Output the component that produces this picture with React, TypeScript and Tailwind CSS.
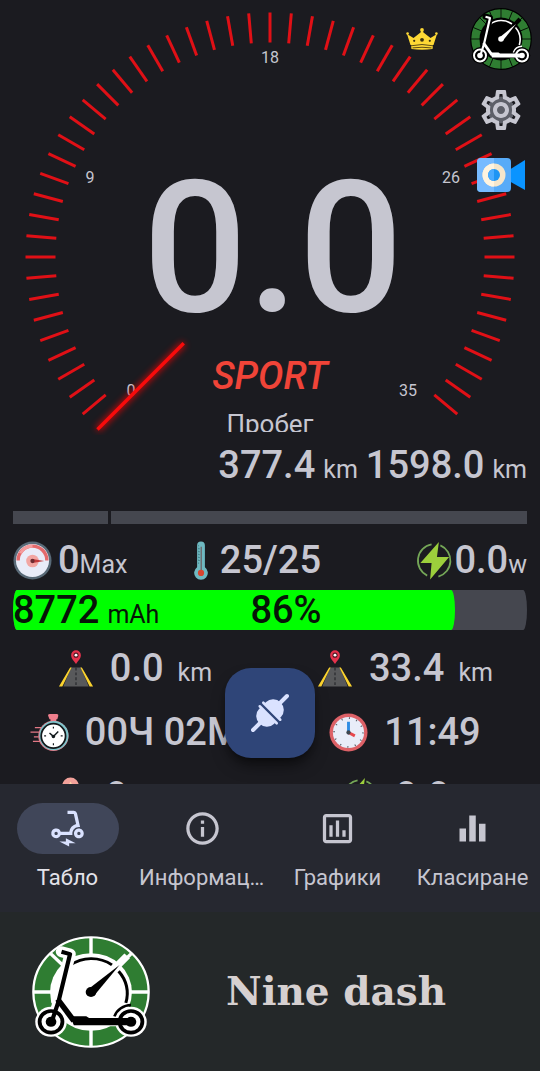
import { ReactNode } from "react";
import {
  MdElectricScooter,
  MdEqualizer,
  MdInfoOutline,
  MdOutlineAssessment,
  MdOutlineSettings,
} from "react-icons/md";

type LogoProps = {
  className: string;
  ink: string;
  paper: string;
  segments: number;
};

const CX = 270;
const CY = 257;

const ticks = Array.from({ length: 53 }, (_, i) => -40 + i * 5);

const scaleLabels = [
  { text: "0", x: 131, y: 396 },
  { text: "9", x: 90, y: 183 },
  { text: "18", x: 270, y: 63 },
  { text: "26", x: 451, y: 183 },
  { text: "35", x: 408, y: 396 },
];

const navItems = [
  { label: "Табло", icon: MdElectricScooter, active: true },
  { label: "Информация", icon: MdInfoOutline, active: false },
  { label: "Графики", icon: MdOutlineAssessment, active: false },
  { label: "Класиране", icon: MdEqualizer, active: false },
];

function polar(angle: number, radius: number) {
  const rad = (angle * Math.PI) / 180;
  return { x: CX + Math.cos(rad) * radius, y: CY - Math.sin(rad) * radius };
}

function Gauge() {
  const outer = polar(225, 244);
  const inner = polar(225, 122);

  return (
    <svg viewBox="0 0 540 435" className="col-start-1 row-start-1 w-full" aria-hidden="true">
      <defs>
        <filter id="glow" x="-20%" y="-20%" width="140%" height="140%">
          <feGaussianBlur stdDeviation="3" />
        </filter>
      </defs>
      {ticks.map((angle) => {
        const a = polar(angle, 244.5);
        const b = polar(angle, 214.5);
        return <line key={angle} x1={a.x} y1={a.y} x2={b.x} y2={b.y} stroke="#e01016" strokeWidth="3" />;
      })}
      {scaleLabels.map((item) => (
        <text key={item.text} x={item.x} y={item.y} textAnchor="middle" fontSize="16" fill="#c6c6d0">
          {item.text}
        </text>
      ))}
      <line x1={outer.x} y1={outer.y} x2={inner.x} y2={inner.y} stroke="#ff0000" strokeWidth="6" opacity="0.7" filter="url(#glow)" />
      <line x1={outer.x} y1={outer.y} x2={inner.x} y2={inner.y} stroke="#f80b0b" strokeWidth="3.4" />
    </svg>
  );
}

function Logo({ className, ink, paper, segments }: LogoProps) {
  const spokes = Array.from({ length: segments }, (_, i) => (i * 360) / segments);

  return (
    <svg viewBox="0 0 62 62" preserveAspectRatio="none" className={className} aria-hidden="true">
      <circle cx="31" cy="31" r="30.3" fill="#2f7d32" stroke={paper} strokeWidth="1.2" />
      {spokes.map((angle) => (
        <line
          key={angle}
          x1="31"
          y1="31"
          x2="31"
          y2="1"
          stroke={paper}
          strokeWidth={segments > 8 ? 0.8 : 1.8}
          transform={`rotate(${angle} 31 31)`}
        />
      ))}
      <circle cx="31" cy="31" r="21.5" fill={paper} />
      <path d="M20 16.300A18.600 18.600 0 0 1 42 16M45.500 19.500A18.600 18.600 0 0 1 49.300 37" fill="none" stroke={ink} strokeWidth="1.6" />
      <path d="M31 31L50 11" stroke={paper} strokeWidth="4" />
      <path d="M29.500 29.500L46 16L32.800 32.800Z" fill={ink} />
      <circle cx="31" cy="31" r="2.8" fill={ink} />
      <path d="M15.500 8.700L20 10L14 36L11 47M13 36L22 47H52" fill="none" stroke={paper} strokeWidth="6" strokeLinejoin="round" strokeLinecap="round" />
      <circle cx="10" cy="47.5" r="8.3" fill={paper} />
      <circle cx="52" cy="47.5" r="8.3" fill={paper} />
      <circle cx="10" cy="47.5" r="6" fill={paper} stroke={ink} strokeWidth="2" />
      <circle cx="52" cy="47.5" r="6" fill={paper} stroke={ink} strokeWidth="2" />
      <circle cx="10" cy="47.5" r="2.8" fill={ink} />
      <circle cx="52" cy="47.5" r="2.8" fill={ink} />
      <path d="M15.500 8.700L20 10L14 36L10.500 47" fill="none" stroke={ink} strokeWidth="2.2" strokeLinejoin="round" />
      <path d="M13.500 35L22 47" fill="none" stroke={ink} strokeWidth="3" />
      <path d="M20 44.400H28.500L30 45.400H52V49.400H22Z" fill={ink} />
      <path d="M43.300 44.500A9.500 9.500 0 0 1 52 38.200" fill="none" stroke={ink} strokeWidth="1.4" />
    </svg>
  );
}

function CrownIcon() {
  return (
    <svg viewBox="0 0 32 22" className="mt-5 h-[22px] w-8" aria-hidden="true">
      <path d="M1 6L7.500 10L14.500 4.500L16 2L17.500 4.500L24.500 10L31 6L27.500 17H4.500Z" fill="#fdd835" />
      <path d="M5 17.200Q16 14.600 27 17.200L26.500 21Q16 22.600 5.500 21Z" fill="#fdd835" />
      <circle cx="1.6" cy="5.6" r="1.3" fill="#fdd835" />
      <circle cx="30.4" cy="5.6" r="1.3" fill="#fdd835" />
      <circle cx="16" cy="2" r="1.9" fill="#fdd835" />
      <path d="M5 17.800Q16 15.200 27 17.800M6.500 19.900Q16 18.600 25.500 19.900" fill="none" stroke="#4a3c12" strokeWidth="0.9" />
      <circle cx="16" cy="11.8" r="1.9" fill="#3a3213" />
      <circle cx="8.2" cy="12.8" r="1.1" fill="#3a3213" />
      <circle cx="23.8" cy="12.8" r="1.1" fill="#3a3213" />
    </svg>
  );
}

function CameraIcon() {
  return (
    <svg viewBox="0 0 48 34" className="h-[34px] w-12" aria-hidden="true">
      <path d="M32 12L48 2V32L32 23Z" fill="#0a94ff" />
      <rect width="34" height="34" rx="4" fill="#57abf8" />
      <path d="M4 0H17V34H4A4 4 0 0 1 0 30V4A4 4 0 0 1 4 0Z" fill="#77bbff" />
      <circle cx="17" cy="17" r="11.5" fill="#f5e6cb" />
      <path d="M17 5.500A11.500 11.500 0 0 0 17 28.500Z" fill="#fff4df" />
      <circle cx="17" cy="17" r="6" fill="#1e95f4" />
      <path d="M17 11A6 6 0 0 0 17 23Z" fill="#4aabff" />
    </svg>
  );
}

function SpeedIcon() {
  return (
    <svg viewBox="0 0 40 40" className="size-[39px]" aria-hidden="true">
      <circle cx="20" cy="20" r="19.5" fill="#596a77" />
      <circle cx="20" cy="20" r="17" fill="#e9ecf8" />
      <path d="M3.500 20A16.500 16.500 0 0 1 36.500 20H33A13 13 0 0 0 7 20Z" fill="#e46a6c" />
      <path d="M6 12A16.500 16.500 0 0 1 20 3.500V7A13 13 0 0 0 9 13Z" fill="#f59c9c" />
      <circle cx="20" cy="20.5" r="6.5" fill="#f2a6a2" />
      <path d="M20 18.500L32 20.500L20 22.500Z" fill="#c0393b" />
      <circle cx="20" cy="20.5" r="2.2" fill="#6e2b30" />
    </svg>
  );
}

function ThermometerIcon() {
  return (
    <svg viewBox="0 0 14 40" className="h-[39px] w-3.5" aria-hidden="true">
      <path d="M3 4.500A4 4 0 0 1 11 4.500V27A7 7 0 1 1 3 27Z" fill="#6fb9c1" />
      <path d="M4.500 4V25M4.500 8H6M4.500 11H6M4.500 14H6M4.500 17H6M4.500 20H6" stroke="#3f8089" strokeWidth="0.8" strokeDasharray="1.5 1.5" />
      <path d="M7.200 6V31" stroke="#6d5a5c" strokeWidth="1.2" />
      <circle cx="7" cy="32.8" r="3.2" fill="#d8452f" />
    </svg>
  );
}

function PowerIcon() {
  return (
    <svg viewBox="0 0 40 40" className="size-[39px]" aria-hidden="true">
      <path d="M17 3.500A17 17 0 0 0 12.500 35.500M26 4.500A17 17 0 0 1 24 36.500" fill="none" stroke="#74a657" strokeWidth="1.8" />
      <path d="M24.500 1L5.500 22.500H17L15.500 39.500L35 16.500H22.500Z" fill="#9ccf3c" />
    </svg>
  );
}

function RoadIcon() {
  return (
    <svg viewBox="0 0 36 40" className="h-[39px] w-9" aria-hidden="true">
      <path d="M13 19H23L31 38.500H5Z" fill="#58595b" />
      <path d="M12 19H13.500L4 38.500H0.500ZM22.500 19H24L35.500 38.500H32Z" fill="#fbd32f" />
      <path d="M18 19V38.500" stroke="#26272b" strokeWidth="1.2" strokeDasharray="3 2" />
      <path d="M18 15.500C15.500 11.500 13 9.500 13 6.300A5 5 0 0 1 23 6.300C23 9.500 20.500 11.500 18 15.500Z" fill="#e5324c" />
      <circle cx="18" cy="6.3" r="2.6" fill="#4b1822" />
      <circle cx="18" cy="6.3" r="1.5" fill="#ffffff" />
    </svg>
  );
}

function StopwatchIcon() {
  return (
    <svg viewBox="0 0 40 40" className="size-[39px]" aria-hidden="true">
      <path d="M5 15H12M0.500 19.500H10M4 24.500H9M3 29H11" stroke="#e37986" strokeWidth="1.3" />
      <path d="M18.500 2.500Q18.500 1 20.500 1H27.500Q29.500 1 29 3L28 6.500H27V9.500H21V6.500H20Z" fill="#ee7e8c" />
      <circle cx="24" cy="23.5" r="15.5" fill="#e37986" />
      <circle cx="24.5" cy="23.2" r="15" fill="#7fc4cb" />
      <circle cx="24" cy="23.5" r="12.5" fill="#ffffff" stroke="#12191c" strokeWidth="1.8" />
      <path d="M24 14V16M24 31V33M14.500 23.500H16.500M31.500 23.500H33.500" stroke="#12191c" strokeWidth="1.2" />
      <path d="M20 20.500L24 24L29 19" fill="none" stroke="#12191c" strokeWidth="1.5" />
      <circle cx="24" cy="24" r="1.8" fill="#12191c" />
    </svg>
  );
}

function ClockIcon() {
  return (
    <svg viewBox="0 0 40 40" className="size-[39px]" aria-hidden="true">
      <circle cx="20" cy="20" r="19.5" fill="#dd6167" />
      <circle cx="20" cy="20" r="16" fill="#e9edf9" />
      <circle cx="20" cy="20" r="14.8" fill="none" stroke="#4d545d" strokeWidth="1.8" strokeDasharray="1 6.749" />
      <path d="M20 20V9" stroke="#2f8de4" strokeWidth="3" />
      <path d="M20 20L26.500 23.500" stroke="#e8484d" strokeWidth="3" />
      <circle cx="20" cy="20" r="2.2" fill="#3e4650" />
    </svg>
  );
}

function PeakIcon() {
  return (
    <svg viewBox="0 0 40 40" className="size-[39px]" aria-hidden="true">
      <circle cx="20" cy="9" r="8.5" fill="#f2a19a" />
      <path d="M20 4.500L24 12H16Z" fill="#ffd9a8" />
    </svg>
  );
}

function PlugIcon() {
  return (
    <svg viewBox="0 0 44 44" className="size-11" fill="#dae2ff" stroke="#dae2ff" strokeLinecap="round" aria-hidden="true">
      <g transform="translate(22 22) rotate(-45)">
        <path d="M-24 0H-12M12 0H24" strokeWidth="4" fill="none" />
        <path d="M-2.500 -10.500V10.500H-5A10 10.500 0 0 1 -5 -10.500ZM2.500 -10.500V10.500H5A10 10.500 0 0 0 5 -10.500Z" stroke="none" />
        <path d="M-2.500 -12V12M2.500 -12V12" strokeWidth="2.6" />
      </g>
    </svg>
  );
}

function Unit({ children }: { children: ReactNode }) {
  return <span className="text-[25px] leading-none font-normal">{children}</span>;
}

function Stat({ icon, value, unit }: { icon: ReactNode; value: string; unit?: string }) {
  return (
    <div className="flex h-16 items-center justify-center gap-4 whitespace-nowrap">
      {icon}
      <p className="flex items-baseline gap-3.5 text-[38px] leading-12">
        {value}
        {unit && <Unit>{unit}</Unit>}
      </p>
    </div>
  );
}

export default function App() {
  return (
    <div lang="bg" className="flex h-screen flex-col bg-[#1b1b20] font-['Roboto',sans-serif] text-[#c6c6d0]">
      <main className="relative min-h-0 flex-1 overflow-hidden">
        <section className="grid">
          <Gauge />
          <div className="col-start-1 row-start-1 flex flex-col items-center pt-[148px]">
            <p className="pl-1.5 text-[184px] leading-[200px] font-medium">0.0</p>
            <p className="mt-0.5 text-[38px] leading-[52px] font-medium text-[#f04438] italic">SPORT</p>
            <p className="mt-1.5 h-6 overflow-hidden text-[26px] leading-8">Пробег</p>
          </div>
        </section>

        <div className="absolute top-2 right-2 flex items-start gap-8">
          <CrownIcon />
          <div className="flex flex-col items-center">
            <Logo className="size-[62px]" ink="#ffffff" paper="#000000" segments={16} />
            <button
              type="button"
              aria-label="Настройки"
              className="mt-4 rounded-full bg-[radial-gradient(circle_closest-side,#5d5f68_55%,transparent_57%)]"
            >
              <MdOutlineSettings className="size-12" />
            </button>
            <button type="button" aria-label="Камера" className="mt-6">
              <CameraIcon />
            </button>
          </div>
        </div>

        <div className="px-[13px] font-medium">
          <div className="flex items-baseline justify-end gap-2 text-[38px] leading-[60px] whitespace-nowrap">
            <p className="flex items-baseline gap-2">
              377.4 <Unit>km</Unit>
            </p>
            <p className="flex items-baseline gap-2">
              1598.0 <Unit>km</Unit>
            </p>
          </div>

          <div className="mt-4 flex h-[13px] gap-[3px]">
            <div className="w-[95px] bg-[#45474f]" />
            <div className="flex-1 bg-[#45474f]" />
          </div>

          <div className="mt-3 flex h-12 items-center justify-between text-[38px] leading-12">
            <div className="flex items-center gap-1.5">
              <SpeedIcon />
              <p>
                0<Unit>Max</Unit>
              </p>
            </div>
            <div className="flex items-center gap-3 pr-7">
              <ThermometerIcon />
              <p>25/25</p>
            </div>
            <div className="flex items-center">
              <PowerIcon />
              <p>
                0.0<Unit>w</Unit>
              </p>
            </div>
          </div>

          <div className="mt-1.5 grid rounded-[4px/20px] bg-[#45474f] text-[38px] leading-10 text-[#071407]">
            <div className="col-start-1 row-start-1 w-[86%] rounded-[4px/20px] bg-[#00ff00]" />
            <p className="col-start-1 row-start-1 flex items-baseline gap-2">
              8772 <Unit>mAh</Unit>
            </p>
            <p className="col-start-1 row-start-1 pl-8 text-center">86%</p>
          </div>
        </div>

        <div className="grid grid-cols-2 pt-1.5 font-medium">
          <Stat icon={<RoadIcon />} value="0.0" unit="km" />
          <Stat icon={<RoadIcon />} value="33.4" unit="km" />
          <Stat icon={<StopwatchIcon />} value="00Ч 02М" />
          <Stat icon={<ClockIcon />} value="11:49" />
          <div className="pr-[92px]">
            <Stat icon={<PeakIcon />} value="0" />
          </div>
          <div className="pr-5">
            <Stat icon={<PowerIcon />} value="0.0" />
          </div>
        </div>

        <button
          type="button"
          aria-label="Свързване"
          className="absolute bottom-[26px] left-1/2 flex size-[90px] -translate-x-1/2 items-center justify-center rounded-[26px] bg-[#2f4578] shadow-lg shadow-black/50"
        >
          <PlugIcon />
        </button>
      </main>

      <nav className="grid h-32 shrink-0 grid-cols-4 bg-[#262830]">
        {navItems.map(({ label, icon: Icon, active }) => (
          <button key={label} type="button" className="flex min-w-0 flex-col items-center pt-[19px]">
            <span
              className={`flex h-[51px] w-[102px] items-center justify-center rounded-full ${
                active ? "bg-[#404659] text-[#dae2ff]" : ""
              }`}
            >
              <Icon className="size-[39px]" />
            </span>
            <span className={`mt-2 w-full truncate px-1 text-center text-[22px] leading-8 ${active ? "text-[#e3e2e9]" : ""}`}>
              {label}
            </span>
          </button>
        ))}
      </nav>

      <footer className="flex h-[159px] shrink-0 items-center bg-[#242829]">
        <Logo className="ml-8 h-28 w-[118px]" ink="#000000" paper="#ffffff" segments={8} />
        <p className="ml-[76px] font-['DejaVu_Serif',serif] text-[39px] font-bold text-[#d6d0d0]">Nine dash</p>
      </footer>
    </div>
  );
}
